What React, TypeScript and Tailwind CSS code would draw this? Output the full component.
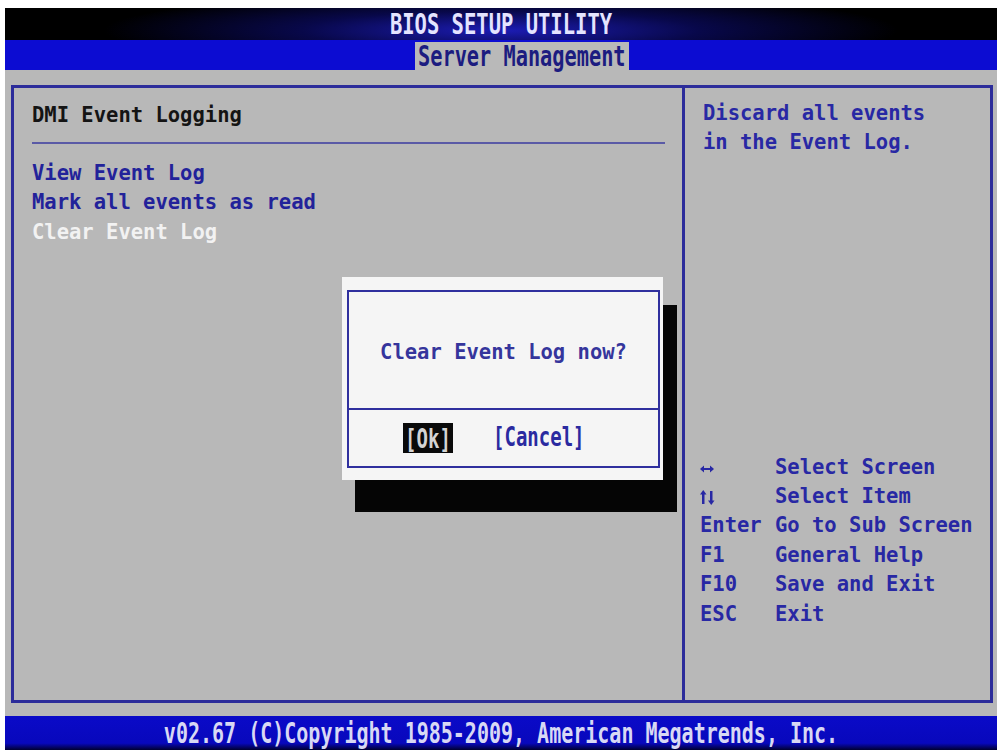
import React from "react";

const mono = { fontFamily: '"DejaVu Sans Mono", "Liberation Mono", monospace' };

// Tall, narrow lettering used by the title bars, footer and dialog buttons
function Tall({ children, className = "" }: { children: React.ReactNode; className?: string }) {
  return (
    <span className={`inline-block scale-y-[1.4] whitespace-pre font-bold leading-none ${className}`}>
      {children}
    </span>
  );
}

// Left/right arrow key glyph
function LeftRight() {
  return (
    <svg width="14" height="8" viewBox="0 0 14 8" className="mt-[3px]" fill="currentColor">
      <rect x="2" y="3" width="10" height="2" />
      <path d="M0 4 L4 0.5 L4 7.5 Z" />
      <path d="M14 4 L10 0.5 L10 7.5 Z" />
    </svg>
  );
}

// Up/down arrow key glyph
function UpDown() {
  return (
    <svg width="15" height="15" viewBox="0 0 15 15" className="mt-[1px]" fill="currentColor">
      <rect x="2" y="3" width="2.5" height="11" />
      <path d="M3.25 0 L6.5 4.5 L0 4.5 Z" />
      <rect x="10" y="1" width="2.5" height="11" />
      <path d="M11.25 15 L14.5 10.5 L8 10.5 Z" />
    </svg>
  );
}

const legend: [React.ReactNode, string][] = [
  [<LeftRight />, "Select Screen"],
  [<UpDown />, "Select Item"],
  ["Enter", "Go to Sub Screen"],
  ["F1", "General Help"],
  ["F10", "Save and Exit"],
  ["ESC", "Exit"],
];

export default function App() {
  return (
    <div
      className="relative h-[756px] w-[1001px] overflow-hidden bg-white pb-[6px] pl-[5px] pr-[4px] pt-[8px]"
      style={mono}
    >
      <div className="flex h-full flex-col">
        {/* title bar */}
        <header className="flex h-[32px] items-center justify-center bg-[radial-gradient(ellipse_40%_120%_at_50%_70%,#1c1cb4_0%,#08084a_50%,#000_100%)]">
          <Tall className="text-[20.5px] text-[#e4e4ff]">BIOS SETUP UTILITY</Tall>
        </header>

        {/* tab strip */}
        <div className="flex h-[30px] items-end bg-[#0c0cd2] pl-[410px]">
          <div className="flex h-[28px] items-center bg-[#b9b9b9] px-[3px]">
            <Tall className="text-[20.3px] text-[#1c1c80]">Server Management</Tall>
          </div>
        </div>

        {/* main area */}
        <main className="flex flex-1 bg-[#b8b8b8] pb-[13px] pl-[6px] pr-[4px] pt-[15px]">
          <div className="flex flex-1 border-[3px] border-[#2c2c9a]">
            <section className="w-[671px] border-r-[3px] border-[#2c2c9a] pl-[18px] pr-[17px] pt-[13px] text-[20.5px] font-bold leading-[29.5px]">
              <div className="text-[#141414]">DMI Event Logging</div>
              <div className="mt-[11px] h-[2px] bg-[#5a5aa6]" />
              <div className="mt-[15px] text-[#22229a]">View Event Log</div>
              <div className="text-[#22229a]">Mark all events as read</div>
              <div className="text-[#f2f2f2]">Clear Event Log</div>
            </section>

            <section className="flex flex-1 flex-col pb-[71px] pt-[11px] text-[20.5px] font-bold leading-[29.4px] text-[#2828a4]">
              <div className="pl-[18px]">
                <div>Discard all events</div>
                <div>in the Event Log.</div>
              </div>
              <div className="mt-auto pl-[15px]">
                {legend.map(([key, text]) => (
                  <div key={text} className="flex items-center">
                    <span className="flex w-[75px] items-center">{key}</span>
                    <span>{text}</span>
                  </div>
                ))}
              </div>
            </section>
          </div>
        </main>

        {/* footer */}
        <footer className="flex h-[34px] items-center justify-center bg-[linear-gradient(to_bottom,#0a0ac8_0%,#0808bc_80%,#000030_100%)]">
          <Tall className="scale-y-[1.3] text-[20px] text-[#d8d8f4]">
            v02.67 (C)Copyright 1985-2009, American Megatrends, Inc.
          </Tall>
        </footer>
      </div>

      {/* confirmation dialog */}
      <div className="absolute left-[355px] top-[305px] h-[207px] w-[322px] bg-[#050505]" />
      <div className="absolute left-[342px] top-[277px] h-[203px] w-[321px] bg-[#f5f5f5] pb-[12px] pl-[5px] pr-[3px] pt-[13px]">
        <div className="flex h-full flex-col border-2 border-[#30309e]">
          <div className="flex h-[116px] items-center justify-center pt-[4px]">
            <span className="text-[20.5px] font-bold text-[#35359c]">Clear Event Log now?</span>
          </div>
          <div className="h-[2px] bg-[#30309e]" />
          <div className="flex flex-1 items-center pl-[54px]">
            <div className="flex h-[30px] w-[50px] items-center justify-center bg-[#0a0a0a]">
              <Tall className="scale-y-[1.3] text-[19px] text-[#d4d4d4]">[Ok]</Tall>
            </div>
            <div className="ml-[40px]">
              <Tall className="scale-y-[1.3] text-[19px] text-[#2a2aa0]">[Cancel]</Tall>
            </div>
          </div>
        </div>
      </div>
    </div>
  );
}
